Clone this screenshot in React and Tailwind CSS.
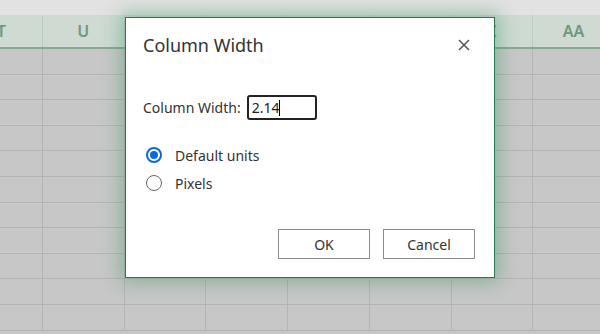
import React from "react";

const cols = ["T", "U", "V", "W", "X", "Y", "Z", "AA"];

export default function App() {
  const rows = Array.from({ length: 11 });
  return (
    <div
      className="relative w-[600px] h-[334px] overflow-hidden bg-[#c7c7c7]"
      style={{ fontFamily: '"Noto Sans", "Open Sans", sans-serif' }}
    >
      <div className="h-[15px] bg-[#e2e2e2]" />
      <div className="flex ml-[-39px] h-[34px] bg-[#cfdad2] border-b-2 border-[#87a892]">
        {cols.map((c) => (
          <div
            key={c}
            className="w-[81.75px] shrink-0 flex items-center justify-center border-r border-[#bccbc1] text-[16px] font-semibold text-[#6b9b7b]"
          >
            {c}
          </div>
        ))}
      </div>
      {rows.map((_, i) => (
        <div key={i} className="flex ml-[-39px] h-[25.6px] border-b border-[#b4b4b4]">
          {cols.map((c) => (
            <div key={c} className="w-[81.75px] shrink-0 border-r border-[#b4b4b4]" />
          ))}
        </div>
      ))}

      <div className="absolute left-[125px] top-[17px] w-[370px] h-[261px] bg-white border border-[#2a7a4b] shadow-[0_0_18px_4px_rgba(60,150,95,0.45)]">
        <div className="flex items-center justify-between pl-[17px] pr-[24px] pt-[14px]">
          <div className="text-[18px] text-[#333333]">Column Width</div>
          <svg width="12" height="12" viewBox="0 0 12 12" className="mt-[-2px]">
            <path d="M1 1 L11 11 M11 1 L1 11" stroke="#555" strokeWidth="1.5" />
          </svg>
        </div>
        <div className="flex items-center pl-[17px] mt-[36px] text-[14px] text-[#333333]">
          <span>Column Width:</span>
          <div className="ml-[6px] w-[70px] h-[25px] border-2 border-[#222] rounded-[3px] flex items-center pl-[3px] text-[14px] text-[#222]">
            2.14<span className="inline-block w-px h-[16px] bg-black" />
          </div>
        </div>
        <div className="pl-[20px] mt-[27px] flex flex-col gap-[12px] text-[14px] text-[#333333]">
          <div className="flex items-center gap-[13px] h-[16px]">
            <div className="w-[16px] h-[16px] rounded-full border-2 border-[#0b68d6] flex items-center justify-center">
              <div className="w-[8px] h-[8px] rounded-full bg-[#0b68d6]" />
            </div>
            <span>Default units</span>
          </div>
          <div className="flex items-center gap-[13px] h-[16px]">
            <div className="w-[16px] h-[16px] rounded-full border border-[#666]" />
            <span>Pixels</span>
          </div>
        </div>
        <div className="flex justify-end gap-[13px] pr-[19px] mt-[38px]">
          <button className="w-[92px] h-[30px] border border-[#8a8a8a] text-[14px] text-[#333333] bg-white">OK</button>
          <button className="w-[92px] h-[30px] border border-[#8a8a8a] text-[14px] text-[#333333] bg-white">Cancel</button>
        </div>
      </div>
    </div>
  );
}
